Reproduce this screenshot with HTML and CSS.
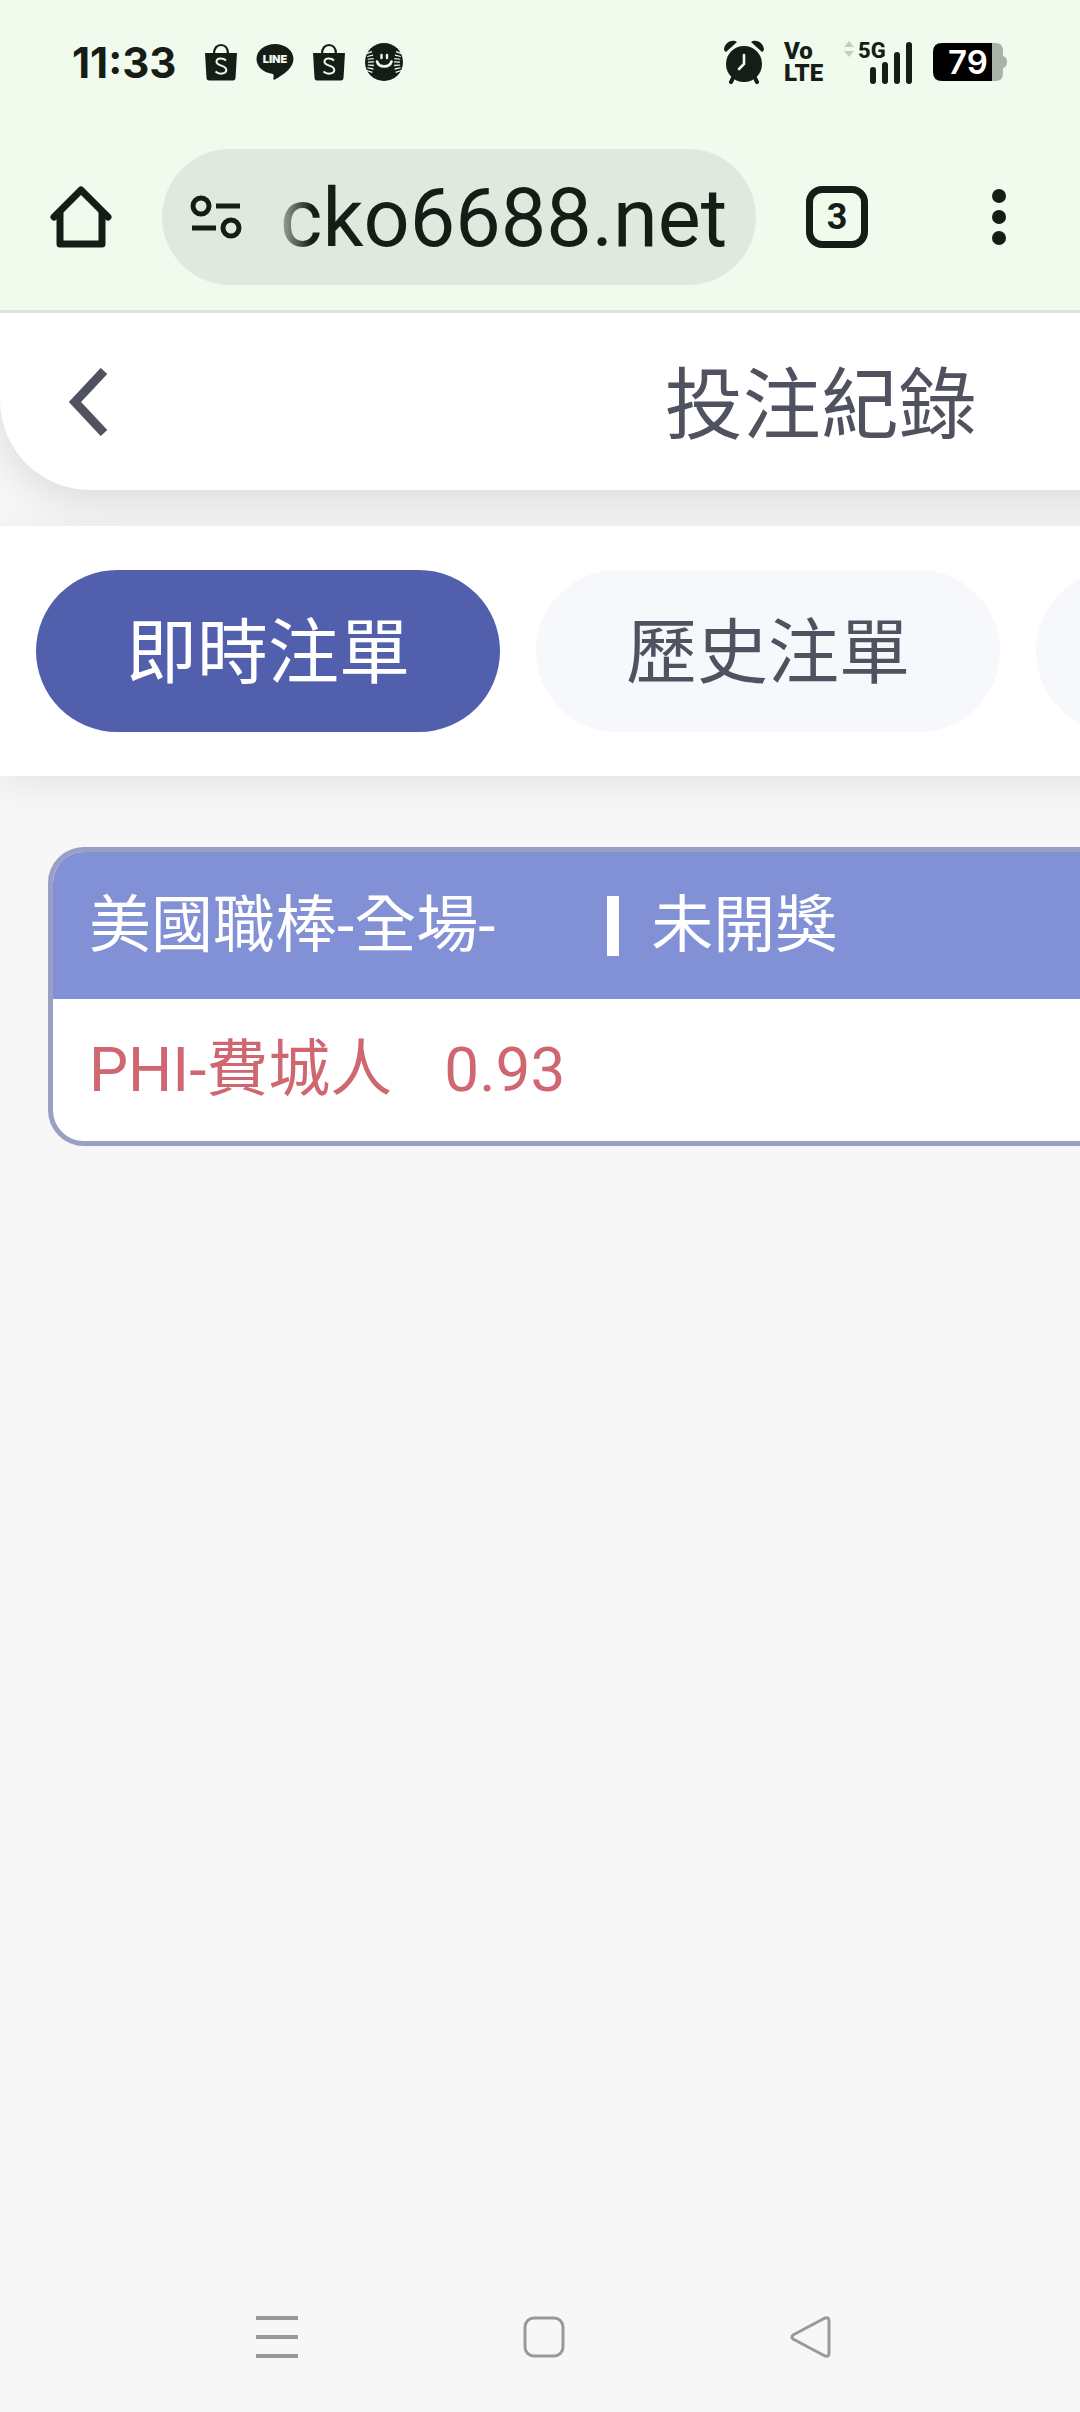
FILE: index.html
```html
<!DOCTYPE html>
<html lang="zh-Hant">
<head>
  <meta charset="UTF-8">
  <meta name="viewport" content="width=device-width, initial-scale=1.0">
  <title>投注紀錄</title>
  <link rel="stylesheet" href="styles.css">
</head>
<body>
  <div class="chrome">
    <div class="status-bar">
      <div class="status-left">
        <span class="clock">11:33</span>
        <svg viewBox="0 0 34 38" width="34" height="38">
          <path d="M1 10h32l-1.500 25q-.200 2.500-2.500 2.500H5q-2.300 0-2.500-2.500z" fill="#161d16"/>
          <path d="M10 11C10 5 13 2 17 2s7 3 7 9" fill="none" stroke="#161d16" stroke-width="2.200"/>
          <path d="M22 17.500c-2.500-2.500-9.500-3-9.500 1.200 0 4.600 9.800 3.200 9.800 8.100 0 4.700-7.600 4.800-10.800 1.700" fill="none" stroke="#f0fbee" stroke-width="2"/>
        </svg>
        <svg viewBox="0 0 38 38" width="38" height="38">
          <path d="M19 1C9 1 .500 7.500.500 16c0 7.500 6.500 13.500 15.500 14.700 1.500.3 1.800 1.300 1.600 3l-.3 2c0 1.100.8 1.100 1.700.7C27 32 37.500 25 37.500 16 37.500 7.500 29 1 19 1z" fill="#161d16"/>
          <text x="19" y="20" text-anchor="middle" class="line-text">LINE</text>
        </svg>
        <svg viewBox="0 0 34 38" width="34" height="38">
          <path d="M1 10h32l-1.500 25q-.200 2.500-2.500 2.500H5q-2.300 0-2.500-2.500z" fill="#161d16"/>
          <path d="M10 11C10 5 13 2 17 2s7 3 7 9" fill="none" stroke="#161d16" stroke-width="2.200"/>
          <path d="M22 17.500c-2.500-2.500-9.500-3-9.500 1.200 0 4.600 9.800 3.200 9.800 8.100 0 4.700-7.600 4.800-10.800 1.700" fill="none" stroke="#f0fbee" stroke-width="2"/>
        </svg>
        <svg viewBox="0 0 40 40" width="40" height="40">
          <circle cx="20" cy="20" r="19" fill="#161d16"/>
          <path d="M5 10q4 11 0 21M35 10q-4 11 0 21" fill="none" stroke="#f0fbee" stroke-width="6" stroke-dasharray="1.200 2"/>
          <path d="M17.500 13v3M23 13v3" stroke="#f0fbee" stroke-width="2.400" stroke-linecap="round"/>
          <path d="M13 19.500c2 6.500 12.500 6.500 14.500 0" fill="none" stroke="#f0fbee" stroke-width="2.600" stroke-linecap="round"/>
        </svg>
      </div>
      <div class="status-right">
        <svg viewBox="0 0 42 44" width="42" height="44">
          <path d="M1 9C2 3 7 0 12 1l2 1L3 12Q1 11 1 9zM41 9C40 3 35 0 30 1l-2 1 11 10q2-1 2-3z" fill="#161d16"/>
          <path d="M11 36l-3 6M31 36l3 6" stroke="#161d16" stroke-width="4" stroke-linecap="round"/>
          <circle cx="21" cy="24" r="18" fill="#161d16"/>
          <path d="M21 15v9l-5 5" fill="none" stroke="#f0fbee" stroke-width="2.600" stroke-linecap="round"/>
        </svg>
        <div class="volte">Vo<br>LTE</div>
        <svg viewBox="0 -6 70 56" width="70" height="56">
          <path d="M6 1l5 6H1zM6 17l5-6H1z" fill="#c3cec1"/>
          <text x="15" y="18" class="net-text">5G</text>
          <path d="M30 30v11M42 25v16M54 15v26M66 5v36" stroke="#161d16" stroke-width="6" stroke-linecap="round"/>
        </svg>
        <svg viewBox="0 0 76 40" width="76" height="40">
          <path d="M60 1h4q7 0 7 8v5q4 1 4 6t-4 6v5q0 8-7 8h-4z" fill="#a9b3a8"/>
          <path d="M60 1H10Q1 1 1 10v20q0 9 9 9h50z" fill="#000"/>
          <text x="36" y="32" text-anchor="middle" class="battery-text">79</text>
        </svg>
      </div>
    </div>

    <div class="toolbar">
      <button class="tool-btn" aria-label="Home">
        <svg viewBox="0 0 62 62" width="62" height="62" fill="none" stroke="#161d16" stroke-width="7" stroke-linejoin="round" stroke-linecap="round">
          <path d="M10 27v31h42V27"/>
          <path d="M4 31L31 4l27 27"/>
        </svg>
      </button>
      <div class="address">
        <svg viewBox="0 0 52 44" width="52" height="44" fill="none" stroke="#161d16" stroke-width="5">
          <circle cx="11" cy="11" r="8"/>
          <path d="M26 11h24M2 33h24"/>
          <circle cx="41" cy="33" r="8"/>
        </svg>
        <span class="url">cko6688.net</span>
      </div>
      <button class="tab-count" aria-label="Tabs">3</button>
      <button class="tool-btn" aria-label="Menu">
        <svg viewBox="0 0 14 56" width="14" height="56" fill="#161d16">
          <circle cx="7" cy="7" r="7"/>
          <circle cx="7" cy="28" r="7"/>
          <circle cx="7" cy="49" r="7"/>
        </svg>
      </button>
    </div>
  </div>

  <main class="viewport">
    <div class="page">
      <header class="page-header">
        <button class="back" aria-label="Back">
          <svg viewBox="0 0 40 68" width="40" height="68" fill="none" stroke="#50535f" stroke-width="9">
            <path d="M36 3L7 34l29 31"/>
          </svg>
        </button>
        <h1 class="page-title">投注紀錄</h1>
      </header>

      <nav class="tabs">
        <button class="tab active">即時注單</button>
        <button class="tab">歷史注單</button>
        <button class="tab" aria-label="More"></button>
      </nav>

      <section class="bet">
        <div class="bet-head">
          <span class="bet-league">美國職棒-全場-</span>
          <span class="bet-status">未開獎</span>
        </div>
        <div class="bet-body">
          <span>PHI-費城人</span>
          <span>0.93</span>
        </div>
      </section>
    </div>
  </main>

  <footer class="nav-bar">
    <button aria-label="Recent apps">
      <svg viewBox="0 0 42 42" width="42" height="42" fill="none" stroke="#999" stroke-width="4">
        <path d="M0 2h42M0 21h42M0 40h42"/>
      </svg>
    </button>
    <button aria-label="Home screen">
      <svg viewBox="0 0 42 42" width="42" height="42" fill="none" stroke="#999" stroke-width="3">
        <rect x="2" y="2" width="38" height="38" rx="9"/>
      </svg>
    </button>
    <button aria-label="Back">
      <svg viewBox="0 0 42 42" width="42" height="42" fill="none" stroke="#999" stroke-width="3" stroke-linejoin="round">
        <path d="M3 19L34 2.500q5-2 5 2v33q0 4-5 2L3 23q-2-2 0-4z"/>
      </svg>
    </button>
  </footer>
</body>
</html>
```
FILE: styles.css
```css
* {
  box-sizing: border-box;
}

body {
  margin: 0;
  min-height: 100vh;
  display: flex;
  flex-direction: column;
  background-color: #f7f7f7;
  color: #50535f;
  font-family: Roboto, "Noto Sans CJK TC", sans-serif;
}

button {
  border: 0;
  padding: 0;
  background: none;
  color: inherit;
  font: inherit;
  cursor: pointer;
}

svg {
  display: block;
  flex: none;
}

/* phone status bar + browser toolbar */
.chrome {
  background-color: #f0fbee;
  color: #161d16;
  border-bottom: 3px solid #dae2da;
}

.status-bar {
  display: flex;
  justify-content: space-between;
  align-items: center;
  height: 124px;
  padding: 0 72px;
}

.status-left {
  display: flex;
  align-items: center;
  gap: 18px;
}

.clock {
  font-family: Inter, sans-serif;
  font-size: 42px;
  font-weight: 700;
  margin-right: 10px;
}

.line-text {
  font: 900 11px Inter, sans-serif;
  fill: #f0fbee;
}

.status-right {
  display: flex;
  align-items: center;
  gap: 19px;
}

.volte {
  width: 40px;
  font-size: 24px;
  font-weight: 900;
  line-height: 22px;
}

.net-text {
  font: 800 22px Roboto, sans-serif;
  fill: #161d16;
}

.battery-text {
  font: 600 33px Inter, sans-serif;
  fill: #fff;
}

.toolbar {
  display: flex;
  align-items: center;
  height: 186px;
  padding: 0 74px 0 50px;
}

.tool-btn {
  flex: none;
}

.address {
  flex: 1;
  display: flex;
  align-items: center;
  gap: 38px;
  height: 136px;
  margin: 0 50px;
  padding: 0 0 0 28px;
  border-radius: 68px;
  background-color: #dfe9dd;
  overflow: hidden;
}

.url {
  padding-top: 4px;
  font-size: 81px;
  line-height: 96px;
  -webkit-mask-image: linear-gradient(to right, rgba(0, 0, 0, 0.3), #000 32px);
  mask-image: linear-gradient(to right, rgba(0, 0, 0, 0.3), #000 32px);
}

.tab-count {
  flex: none;
  width: 62px;
  height: 62px;
  margin-right: 124px;
  border: 7px solid #161d16;
  border-radius: 16px;
  font-size: 36px;
  font-weight: 700;
  line-height: 48px;
}

/* the site is wider than the screen and runs off to the right */
.viewport {
  flex: 1;
  overflow: hidden;
}

.page {
  width: 152%;
}

.page-header {
  display: grid;
  grid-template-columns: 1fr auto 1fr;
  align-items: center;
  height: 177px;
  padding: 0 68px;
  background-color: #fff;
  border-radius: 0 0 90px 90px;
  box-shadow: 0 12px 40px rgba(0, 0, 0, 0.11);
}

.back {
  justify-self: start;
}

.page-title {
  margin: 0;
  padding-top: 10px;
  font-size: 78px;
  font-weight: 400;
  line-height: 90px;
}

.tabs {
  position: relative;
  display: flex;
  gap: 36px;
  margin-top: 36px;
  padding: 44px 36px;
  background-color: #fff;
  box-shadow: 0 8px 36px rgba(0, 0, 0, 0.08);
}

.tab {
  flex: none;
  min-width: 464px;
  height: 162px;
  padding: 0 90px 10px;
  border-radius: 81px;
  background-color: #f7f8fc;
  font-size: 71px;
}

.tab.active {
  background-color: #515fad;
  color: #fff;
}

.bet {
  margin: 71px 48px 0;
  border: 5px solid #9a9fc4;
  border-radius: 36px;
  background-color: #fff;
  font-size: 62px;
  line-height: 72px;
  overflow: hidden;
}

.bet-head {
  display: flex;
  align-items: center;
  gap: 112px;
  height: 147px;
  padding: 0 36px;
  background-color: #8290d6;
  color: #fff;
}

.bet-status {
  display: flex;
  align-items: center;
  gap: 32px;
}

.bet-status::before {
  content: "";
  width: 12px;
  height: 60px;
  background-color: #fff;
}

.bet-body {
  display: flex;
  align-items: baseline;
  gap: 52px;
  height: 142px;
  padding: 35px 36px 0;
  color: #cf6670;
}

.nav-bar {
  display: flex;
  justify-content: space-between;
  align-items: center;
  height: 150px;
  padding: 0 248px 0 256px;
}
```
